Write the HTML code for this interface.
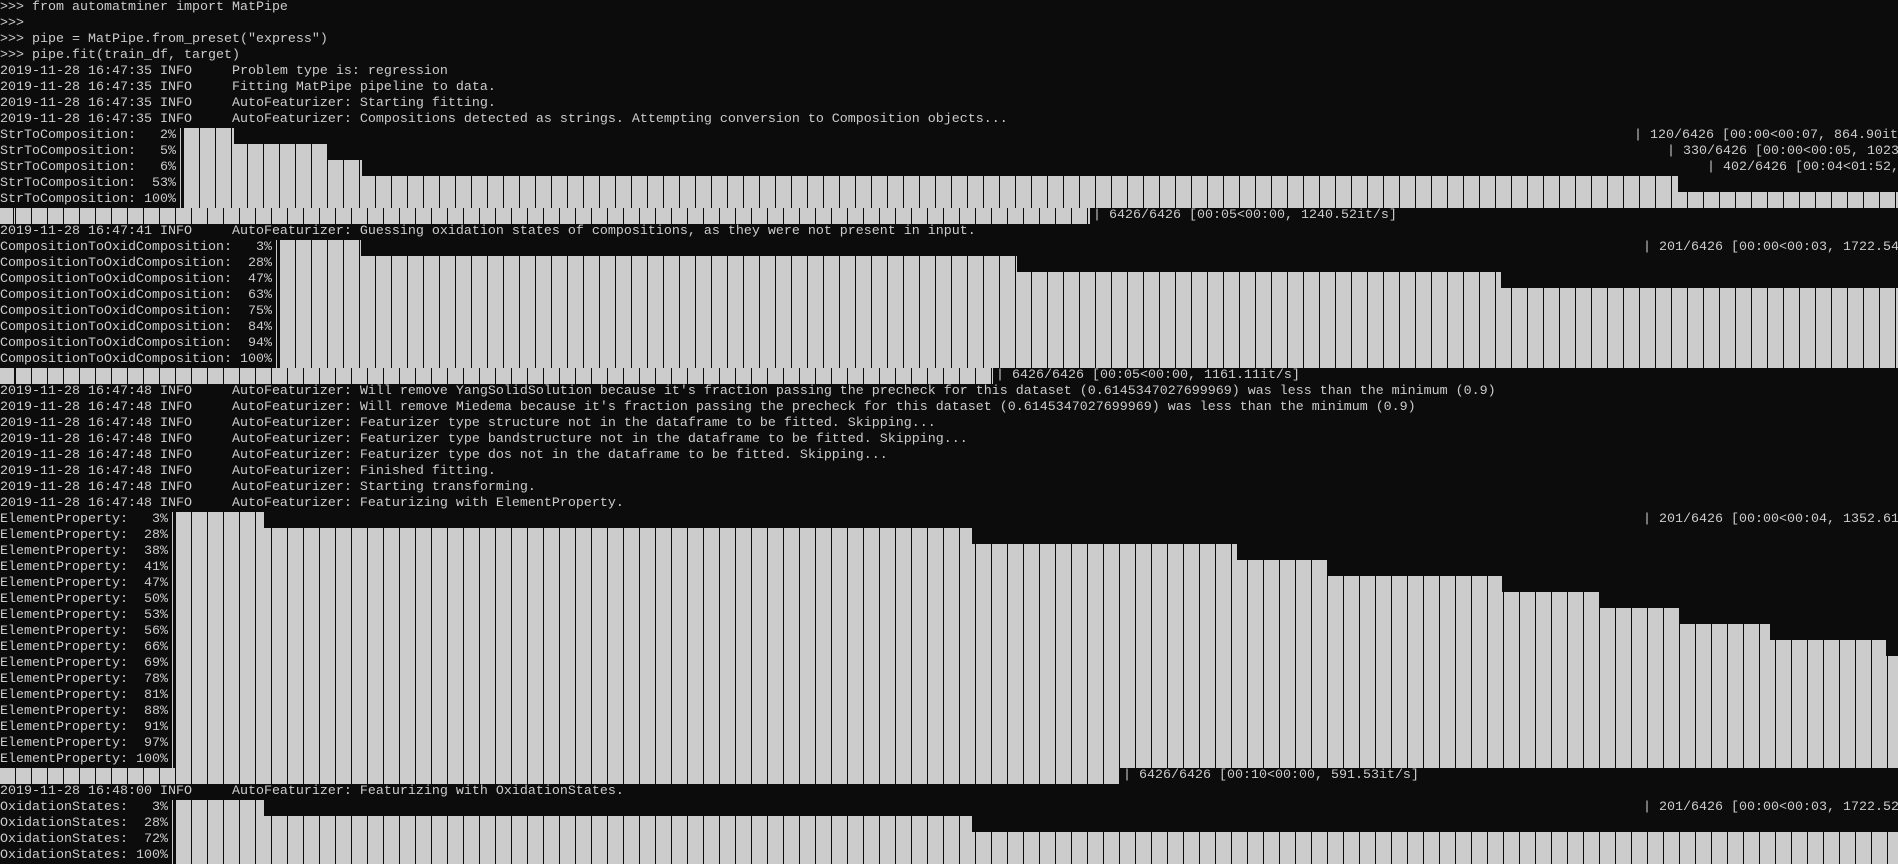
<!DOCTYPE html>
<html><head><meta charset="utf-8"><style>
html,body{margin:0;padding:0;background:#0c0c0c;width:1898px;height:861px;overflow:hidden}
.t{position:absolute;left:0;height:16px;line-height:16px;font-family:"Liberation Mono","Noto Sans CJK SC",monospace;font-size:13.33px;color:#cccccc;white-space:pre}
.b{position:absolute;height:16px;background:repeating-linear-gradient(90deg,#0c0c0c 0 1px,#cccccc 1px 16px)}
.p{position:absolute;width:1px;height:16px;background:#cccccc}
</style></head><body>
<div class="t" style="top:0">&gt;&gt;&gt; from automatminer import MatPipe</div>
<div class="t" style="top:16px">&gt;&gt;&gt;</div>
<div class="t" style="top:32px">&gt;&gt;&gt; pipe = MatPipe.from_preset("express")</div>
<div class="t" style="top:48px">&gt;&gt;&gt; pipe.fit(train_df, target)</div>
<div class="t" style="top:64px">2019-11-28 16:47:35 INFO     Problem type is: regression</div>
<div class="t" style="top:80px">2019-11-28 16:47:35 INFO     Fitting MatPipe pipeline to data.</div>
<div class="t" style="top:96px">2019-11-28 16:47:35 INFO     AutoFeaturizer: Starting fitting.</div>
<div class="t" style="top:112px">2019-11-28 16:47:35 INFO     AutoFeaturizer: Compositions detected as strings. Attempting conversion to Composition objects...</div>
<div class="t" style="top:128px">StrToComposition:   2%</div>
<div class="t" style="top:144px">StrToComposition:   5%</div>
<div class="t" style="top:160px">StrToComposition:   6%</div>
<div class="t" style="top:176px">StrToComposition:  53%</div>
<div class="t" style="top:192px">StrToComposition: 100%</div>
<div class="p" style="left:180px;top:128px;height:80px"></div>
<div class="b" style="left:183px;width:51px;top:128px"></div>
<div class="b" style="left:183px;width:144px;top:144px"></div>
<div class="b" style="left:183px;width:179px;top:160px"></div>
<div class="b" style="left:183px;width:1495px;top:176px"></div>
<div class="b" style="left:183px;width:1715px;top:192px"></div>
<div class="b" style="left:0;width:1090px;top:208px;background-position:15px 0"></div>
<div class="t" style="top:128px;left:1634px">| 120/6426 [00:00&lt;00:07, 864.90it</div>
<div class="t" style="top:144px;left:1667px">| 330/6426 [00:00&lt;00:05, 1023</div>
<div class="t" style="top:160px;left:1707px">| 402/6426 [00:04&lt;01:52,</div>
<div class="t" style="top:208px;left:1093px">| 6426/6426 [00:05&lt;00:00, 1240.52it/s]</div>
<div class="t" style="top:224px">2019-11-28 16:47:41 INFO     AutoFeaturizer: Guessing oxidation states of compositions, as they were not present in input.</div>
<div class="t" style="top:240px">CompositionToOxidComposition:   3%</div>
<div class="t" style="top:256px">CompositionToOxidComposition:  28%</div>
<div class="t" style="top:272px">CompositionToOxidComposition:  47%</div>
<div class="t" style="top:288px">CompositionToOxidComposition:  63%</div>
<div class="t" style="top:304px">CompositionToOxidComposition:  75%</div>
<div class="t" style="top:320px">CompositionToOxidComposition:  84%</div>
<div class="t" style="top:336px">CompositionToOxidComposition:  94%</div>
<div class="t" style="top:352px">CompositionToOxidComposition: 100%</div>
<div class="p" style="left:276px;top:240px;height:128px"></div>
<div class="b" style="left:279px;width:82px;top:240px"></div>
<div class="b" style="left:279px;width:738px;top:256px"></div>
<div class="b" style="left:279px;width:1222px;top:272px"></div>
<div class="b" style="left:279px;width:1619px;top:288px;height:80px"></div>
<div class="b" style="left:0;width:993px;top:368px;background-position:15px 0"></div>
<div class="t" style="top:240px;left:1643px">| 201/6426 [00:00&lt;00:03, 1722.54</div>
<div class="t" style="top:368px;left:996px">| 6426/6426 [00:05&lt;00:00, 1161.11it/s]</div>
<div class="t" style="top:384px">2019-11-28 16:47:48 INFO     AutoFeaturizer: Will remove YangSolidSolution because it's fraction passing the precheck for this dataset (0.6145347027699969) was less than the minimum (0.9)</div>
<div class="t" style="top:400px">2019-11-28 16:47:48 INFO     AutoFeaturizer: Will remove Miedema because it's fraction passing the precheck for this dataset (0.6145347027699969) was less than the minimum (0.9)</div>
<div class="t" style="top:416px">2019-11-28 16:47:48 INFO     AutoFeaturizer: Featurizer type structure not in the dataframe to be fitted. Skipping...</div>
<div class="t" style="top:432px">2019-11-28 16:47:48 INFO     AutoFeaturizer: Featurizer type bandstructure not in the dataframe to be fitted. Skipping...</div>
<div class="t" style="top:448px">2019-11-28 16:47:48 INFO     AutoFeaturizer: Featurizer type dos not in the dataframe to be fitted. Skipping...</div>
<div class="t" style="top:464px">2019-11-28 16:47:48 INFO     AutoFeaturizer: Finished fitting.</div>
<div class="t" style="top:480px">2019-11-28 16:47:48 INFO     AutoFeaturizer: Starting transforming.</div>
<div class="t" style="top:496px">2019-11-28 16:47:48 INFO     AutoFeaturizer: Featurizing with ElementProperty.</div>
<div class="t" style="top:512px">ElementProperty:   3%</div>
<div class="t" style="top:528px">ElementProperty:  28%</div>
<div class="t" style="top:544px">ElementProperty:  38%</div>
<div class="t" style="top:560px">ElementProperty:  41%</div>
<div class="t" style="top:576px">ElementProperty:  47%</div>
<div class="t" style="top:592px">ElementProperty:  50%</div>
<div class="t" style="top:608px">ElementProperty:  53%</div>
<div class="t" style="top:624px">ElementProperty:  56%</div>
<div class="t" style="top:640px">ElementProperty:  66%</div>
<div class="t" style="top:656px">ElementProperty:  69%</div>
<div class="t" style="top:672px">ElementProperty:  78%</div>
<div class="t" style="top:688px">ElementProperty:  81%</div>
<div class="t" style="top:704px">ElementProperty:  88%</div>
<div class="t" style="top:720px">ElementProperty:  91%</div>
<div class="t" style="top:736px">ElementProperty:  97%</div>
<div class="t" style="top:752px">ElementProperty: 100%</div>
<div class="p" style="left:172px;top:512px;height:256px"></div>
<div class="b" style="left:175px;width:89px;top:512px"></div>
<div class="b" style="left:175px;width:797px;top:528px"></div>
<div class="b" style="left:175px;width:1062px;top:544px"></div>
<div class="b" style="left:175px;width:1152px;top:560px"></div>
<div class="b" style="left:175px;width:1327px;top:576px"></div>
<div class="b" style="left:175px;width:1424px;top:592px"></div>
<div class="b" style="left:175px;width:1504px;top:608px"></div>
<div class="b" style="left:175px;width:1595px;top:624px"></div>
<div class="b" style="left:175px;width:1711px;top:640px"></div>
<div class="b" style="left:175px;width:1723px;top:656px;height:112px"></div>
<div class="b" style="left:0;width:1120px;top:768px;background-position:15px 0"></div>
<div class="t" style="top:512px;left:1643px">| 201/6426 [00:00&lt;00:04, 1352.61</div>
<div class="t" style="top:768px;left:1123px">| 6426/6426 [00:10&lt;00:00, 591.53it/s]</div>
<div class="t" style="top:784px">2019-11-28 16:48:00 INFO     AutoFeaturizer: Featurizing with OxidationStates.</div>
<div class="t" style="top:800px">OxidationStates:   3%</div>
<div class="t" style="top:816px">OxidationStates:  28%</div>
<div class="t" style="top:832px">OxidationStates:  72%</div>
<div class="t" style="top:848px">OxidationStates: 100%</div>
<div class="p" style="left:172px;top:800px;height:64px"></div>
<div class="b" style="left:175px;width:89px;top:800px"></div>
<div class="b" style="left:175px;width:797px;top:816px"></div>
<div class="b" style="left:175px;width:1723px;top:832px;height:32px"></div>
<div class="t" style="top:800px;left:1643px">| 201/6426 [00:00&lt;00:03, 1722.52</div>
</body></html>
